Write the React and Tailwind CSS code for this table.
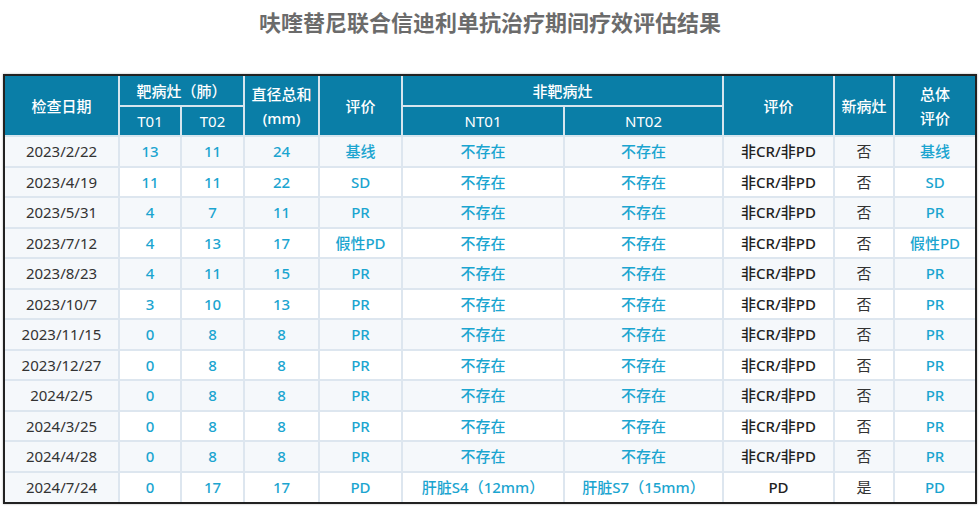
import React from 'react';

// 疗效评估数据
const ROWS = [
  { date: '2023/2/22', t1: '13', t2: '11', sum: '24', eval: '基线', nt1: '不存在', nt2: '不存在', ntEval: '非CR/非PD', newL: '否', total: '基线' },
  { date: '2023/4/19', t1: '11', t2: '11', sum: '22', eval: 'SD', nt1: '不存在', nt2: '不存在', ntEval: '非CR/非PD', newL: '否', total: 'SD' },
  { date: '2023/5/31', t1: '4', t2: '7', sum: '11', eval: 'PR', nt1: '不存在', nt2: '不存在', ntEval: '非CR/非PD', newL: '否', total: 'PR' },
  { date: '2023/7/12', t1: '4', t2: '13', sum: '17', eval: '假性PD', nt1: '不存在', nt2: '不存在', ntEval: '非CR/非PD', newL: '否', total: '假性PD' },
  { date: '2023/8/23', t1: '4', t2: '11', sum: '15', eval: 'PR', nt1: '不存在', nt2: '不存在', ntEval: '非CR/非PD', newL: '否', total: 'PR' },
  { date: '2023/10/7', t1: '3', t2: '10', sum: '13', eval: 'PR', nt1: '不存在', nt2: '不存在', ntEval: '非CR/非PD', newL: '否', total: 'PR' },
  { date: '2023/11/15', t1: '0', t2: '8', sum: '8', eval: 'PR', nt1: '不存在', nt2: '不存在', ntEval: '非CR/非PD', newL: '否', total: 'PR' },
  { date: '2023/12/27', t1: '0', t2: '8', sum: '8', eval: 'PR', nt1: '不存在', nt2: '不存在', ntEval: '非CR/非PD', newL: '否', total: 'PR' },
  { date: '2024/2/5', t1: '0', t2: '8', sum: '8', eval: 'PR', nt1: '不存在', nt2: '不存在', ntEval: '非CR/非PD', newL: '否', total: 'PR' },
  { date: '2024/3/25', t1: '0', t2: '8', sum: '8', eval: 'PR', nt1: '不存在', nt2: '不存在', ntEval: '非CR/非PD', newL: '否', total: 'PR' },
  { date: '2024/4/28', t1: '0', t2: '8', sum: '8', eval: 'PR', nt1: '不存在', nt2: '不存在', ntEval: '非CR/非PD', newL: '否', total: 'PR' },
  { date: '2024/7/24', t1: '0', t2: '17', sum: '17', eval: 'PD', nt1: '肝脏S4（12mm）', nt2: '肝脏S7（15mm）', ntEval: 'PD', newL: '是', total: 'PD' },
];

const th = 'border-2 border-[#d6e5ee] bg-[#0a7ea7] text-white font-medium text-[15px] leading-[18px] text-center p-0';
const td = 'border-2 border-[#dde6ef] text-[15px] text-center p-0 h-[30.5px]';
const blue = 'text-[#1ba5d0] font-medium';

export default function App() {
  return (
    <div
      className="w-[980px] h-[507px] bg-white overflow-hidden"
      style={{ fontFamily: '"Noto Sans", "Noto Sans CJK SC", sans-serif' }}
    >
      <h1 className="text-center text-[22px] font-bold text-[#6b6b6b] pt-[7px] h-[74px] leading-[30px]">
        呋喹替尼联合信迪利单抗治疗期间疗效评估结果
      </h1>
      <div className="ml-[3px] w-[974px] border-2 border-[#222] shadow-[0_0_2px_rgba(0,0,0,0.3)]">
        <table className="w-full border-collapse table-fixed border-hidden">
          <colgroup>
            <col className="w-[114px]" />
            <col className="w-[62px]" />
            <col className="w-[63px]" />
            <col className="w-[75px]" />
            <col className="w-[83px]" />
            <col className="w-[162px]" />
            <col className="w-[159px]" />
            <col className="w-[111px]" />
            <col className="w-[60px]" />
            <col />
          </colgroup>
          <thead>
            <tr className="h-[30px]">
              <th rowSpan={2} className={th}>检查日期</th>
              <th colSpan={2} className={th}>靶病灶（肺）</th>
              <th rowSpan={2} className={`${th} leading-[24px]`}>直径总和<br />(mm)</th>
              <th rowSpan={2} className={th}>评价</th>
              <th colSpan={2} className={th}>非靶病灶</th>
              <th rowSpan={2} className={th}>评价</th>
              <th rowSpan={2} className={th}>新病灶</th>
              <th rowSpan={2} className={`${th} leading-[24px]`}>总体<br />评价</th>
            </tr>
            <tr className="h-[30px]">
              <th className={`${th} font-normal`}>T01</th>
              <th className={`${th} font-normal`}>T02</th>
              <th className={`${th} font-normal`}>NT01</th>
              <th className={`${th} font-normal`}>NT02</th>
            </tr>
          </thead>
          <tbody>
            {ROWS.map((r, i) => (
              <tr key={r.date} className={i % 2 === 0 ? 'bg-[#f5f8fb]' : 'bg-white'}>
                <td className={`${td} text-[#333] bg-[#f5f8fb]`}>{r.date}</td>
                <td className={`${td} ${blue}`}>{r.t1}</td>
                <td className={`${td} ${blue}`}>{r.t2}</td>
                <td className={`${td} ${blue}`}>{r.sum}</td>
                <td className={`${td} ${blue}`}>{r.eval}</td>
                <td className={`${td} ${blue}`}>{r.nt1}</td>
                <td className={`${td} ${blue}`}>{r.nt2}</td>
                <td className={`${td} text-[#222] font-medium`}>{r.ntEval}</td>
                <td className={`${td} text-[#333]`}>{r.newL}</td>
                <td className={`${td} ${blue}`}>{r.total}</td>
              </tr>
            ))}
          </tbody>
        </table>
      </div>
    </div>
  );
}
